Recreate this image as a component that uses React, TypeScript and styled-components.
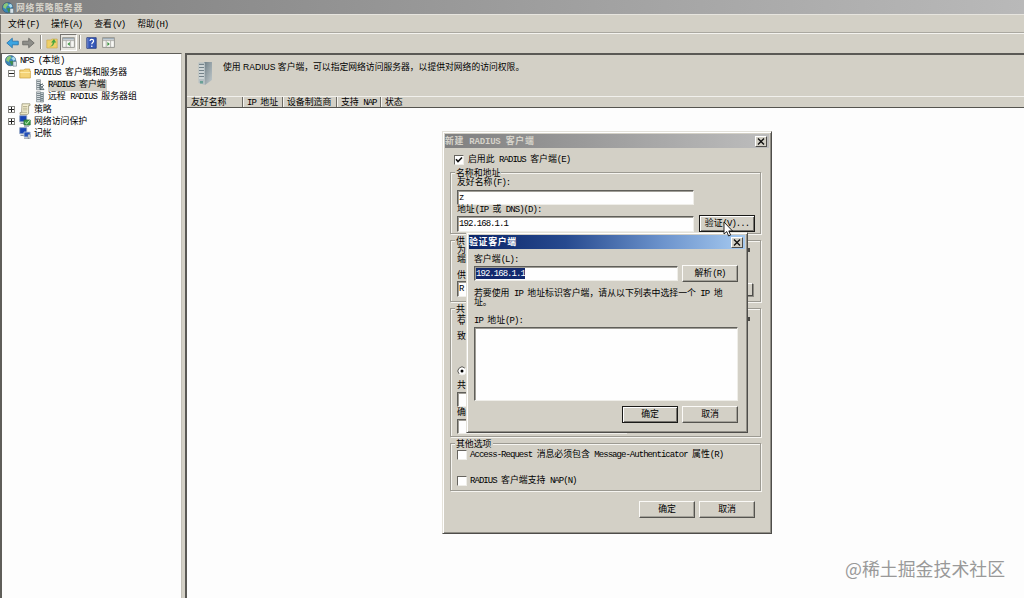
import React from 'react';
import styled, { createGlobalStyle, css } from 'styled-components';

const Global = createGlobalStyle`
  * { box-sizing: border-box; }
  body { margin: 0; overflow: hidden; background: #fdfdfd; }
`;

const FACE = '#d3d0c6';

/* ---------- text: full-width glyphs 8.88px, half-width glyphs 4.44px ---------- */

const Half = styled.span`
  font-family: "Liberation Mono", monospace;
  font-size: 9px;
  letter-spacing: -0.96px;
`;
const Line = styled.span<{ $bold?: boolean; $color?: string }>`
  display: inline-block;
  font: ${p => (p.$bold ? 700 : 400)} 8.88px/12px "Noto Sans CJK SC", sans-serif;
  color: ${p => p.$color || '#000'};
  white-space: pre;
  flex: none;
  margin-bottom: 1px;
  ${p =>
    p.$bold &&
    css`
      letter-spacing: 0.7px;
      margin-bottom: 0;
      ${Half} { letter-spacing: -0.2px; }
    `}
`;

function Text({ children, bold, color }: { children: string; bold?: boolean; color?: string }) {
  const runs = children.match(/[\x20-\x7e]+|[^\x20-\x7e]+/g) || [];
  return (
    <Line $bold={bold} $color={color}>
      {runs.map((r, i) => (/^[\x20-\x7e]/.test(r) ? <Half key={i}>{r}</Half> : r))}
    </Line>
  );
}

/* ---------- main window ---------- */

const Desktop = styled.div`
  position: relative;
  width: 1024px;
  height: 598px;
  display: flex;
  flex-direction: column;
  overflow: hidden;
  background: ${FACE};
`;
const AppTitle = styled.div`
  height: 15px;
  flex: none;
  display: flex;
  align-items: center;
  gap: 2px;
  padding: 1px 0 0 2px;
  background: linear-gradient(90deg, #808080, #b9b9b9);
  border-bottom: 1px solid #e6e4de;
`;
const MenuBar = styled.div`
  height: 18px;
  flex: none;
  display: flex;
  align-items: center;
  gap: 12px;
  padding: 3px 0 0 7px;
  border-left: 1px solid #77756f;
  border-bottom: 1px solid #aaa8a0;
`;
const ToolBar = styled.div`
  height: 20px;
  flex: none;
  display: flex;
  align-items: flex-start;
  padding-left: 4px;
  border-top: 1px solid #f4f3ef;
  border-left: 1px solid #77756f;
`;
const Tool = styled.div<{ $w: number; $pressed?: boolean }>`
  width: ${p => p.$w}px;
  height: 17px;
  display: flex;
  align-items: center;
  justify-content: center;
  ${p =>
    p.$pressed &&
    css`
      background: #e8e6e0;
      border: 1px solid;
      border-color: #77756f #fff #fff #77756f;
    `}
`;
const Divider = styled.div`
  width: 2px;
  height: 14px;
  margin: 1px 2px 0;
  border-left: 1px solid #8d8b84;
  border-right: 1px solid #fff;
`;
const Body = styled.div`
  flex: 1;
  display: flex;
  min-height: 0;
`;
const Tree = styled.div`
  width: 182px;
  flex: none;
  padding-top: 1px;
  border: solid #5f5e59;
  border-width: 1px 0 0 2px;
  border-right: 1px solid #c3c1b8;
  background: #fdfdfd;
`;
const TreeRow = styled.div<{ $pad: number; $gap?: number }>`
  height: 12px;
  display: flex;
  align-items: center;
  padding-left: ${p => p.$pad}px;
  gap: ${p => p.$gap ?? 3}px;
`;
const Expander = styled.span`
  width: 7px;
  height: 7px;
  margin-right: 1px;
  flex: none;
  border: 1px solid #8a8a86;
  display: flex;
  align-items: center;
  justify-content: center;
`;
const Selected = styled.span`
  display: flex;
  height: 11px;
  align-items: center;
  background: #d2cfc5;
  padding-right: 1px;
`;
const Detail = styled.div`
  flex: 1;
  margin-left: 3px;
  border: solid #5a5955;
  border-width: 2px 0 0 2px;
  display: flex;
  flex-direction: column;
  background: #fdfdfd;
`;
const Banner = styled.div`
  height: 41px;
  flex: none;
  display: flex;
  align-items: flex-start;
  padding: 6px 0 0 10px;
  gap: 9px;
  background: ${FACE};
`;
const BannerText = styled.div`
  font: 8.8px/11px "Noto Sans CJK SC", sans-serif;
  color: #000;
  white-space: pre;
`;
const BannerLatin = styled.span`
  font-family: "Liberation Sans", sans-serif;
  font-size: 8.6px;
`;
const Columns = styled.div`
  height: 12px;
  flex: none;
  display: flex;
  background: ${FACE};
  border-top: 1px solid #f1f0ec;
  border-bottom: 1px solid #55544f;
`;
const Column = styled.div<{ $w?: number }>`
  width: ${p => (p.$w ? p.$w + 'px' : 'auto')};
  height: 10px;
  display: flex;
  align-items: center;
  padding: 1px 0 0 4px;
  ${p => p.$w && css`border-right: 1px solid #6d6b65; box-shadow: 1px 0 #f4f3ef;`}
`;

/* ---------- dialogs ---------- */

const Dialog = styled.div<{ $x: number; $y: number; $w: number; $h: number }>`
  position: absolute;
  left: ${p => p.$x}px;
  top: ${p => p.$y}px;
  width: ${p => p.$w}px;
  height: ${p => p.$h}px;
  background: ${FACE};
  border: 1px solid;
  border-color: #e4e2da #4e4d4a #4e4d4a #e4e2da;
  box-shadow: inset 1px 1px #fff, inset -1px -1px #918f87;
  padding: 2px;
  display: flex;
  flex-direction: column;
`;
const DialogTitle = styled.div<{ $active?: boolean }>`
  height: 14px;
  flex: none;
  display: flex;
  align-items: center;
  justify-content: space-between;
  padding: 0 2px 0 0;
  background: ${p =>
    p.$active
      ? 'linear-gradient(90deg, #0b2568 0%, #274a8f 35%, #6c93cc 70%, #a6caf0 100%)'
      : 'linear-gradient(90deg, #808080, #bdbdbd)'};
`;
const CloseBox = styled.div`
  width: 12px;
  height: 11px;
  display: flex;
  align-items: center;
  justify-content: center;
  background: ${FACE};
  border: 1px solid;
  border-color: #fff #4e4d4a #4e4d4a #fff;
`;
const Group = styled.div<{ $h: number; $mt: number }>`
  height: ${p => p.$h}px;
  margin: ${p => p.$mt}px 8px 0 5px;
  flex: none;
  border: 1px solid #9c9a92;
  box-shadow: 1px 1px #f6f5f1, inset 1px 1px #f6f5f1;
  padding: 0 5px 0 6px;
`;
const Legend = styled.div`
  display: flex;
  width: max-content;
  height: 10px;
  align-items: center;
  margin: -5px 0 0 -2px;
  padding: 0 1px;
  background: ${FACE};
`;
const Row = styled.div<{ $h?: number; $mt?: number; $gap?: number; $pl?: number; $spread?: boolean }>`
  display: flex;
  align-items: center;
  flex: none;
  height: ${p => p.$h ?? 10}px;
  margin-top: ${p => p.$mt ?? 0}px;
  gap: ${p => p.$gap ?? 0}px;
  padding-left: ${p => p.$pl ?? 0}px;
  ${p => p.$spread && css`justify-content: space-between;`}
`;
const Field = styled.div<{ $w: number; $h?: number }>`
  width: ${p => p.$w}px;
  height: ${p => p.$h ?? 16}px;
  flex: none;
  display: flex;
  align-items: center;
  padding-left: 1px;
  background: #fefefe;
  border: 1px solid;
  border-color: #5f5e59 #efeee9 #efeee9 #5f5e59;
  box-shadow: inset 1px 1px #a09e97;
`;
const Highlight = styled.span`
  display: flex;
  height: 11px;
  align-items: center;
  background: #12296e;
`;
const Button = styled.div<{ $default?: boolean }>`
  width: 56px;
  height: 17px;
  flex: none;
  display: flex;
  align-items: center;
  justify-content: center;
  background: ${FACE};
  border: 1px solid;
  border-color: ${p => (p.$default ? '#1a1a18' : '#fbfaf7 #55544f #55544f #fbfaf7')};
  box-shadow: ${p => (p.$default ? 'inset 1px 1px #fff, inset -1px -1px #77756f' : 'inset -1px -1px #a3a199')};
`;
const Check = styled.span`
  width: 10px;
  height: 10px;
  flex: none;
  display: flex;
  align-items: center;
  justify-content: center;
  background: #fff;
  border: 1px solid;
  border-color: #66645f #efeee9 #efeee9 #66645f;
`;
const Combo = styled.span`
  width: 14px;
  height: 13px;
  margin-right: 2px;
  background: ${FACE};
  border: 1px solid;
  border-color: #fff #4e4d4a #4e4d4a #fff;
  box-shadow: 1px 1px #8d8b84;
`;
const EdgeMark = styled.span`
  width: 2px;
  height: 4px;
  margin-right: 5px;
  background: #4a4945;
`;
const Pointer = styled.svg`
  position: absolute;
  left: 723px;
  top: 221px;
`;
const Watermark = styled.div`
  position: absolute;
  left: 845px;
  top: 555px;
  font: 17.9px/26px "Noto Sans CJK SC", sans-serif;
  color: #999;
  white-space: nowrap;
`;

/* ---------- icons ---------- */

const Globe = ({ size = 12 }: { size?: number }) => (
  <svg width={size} height={size} viewBox="0 0 12 12">
    <circle cx="5.6" cy="5.6" r="5.2" fill="#3b87b8" stroke="#31526b" strokeWidth=".6" />
    <path d="M2 2.2 5 .8l1.5 1.7L4.6 4.6 3.7 7 1 5.2z" fill="#8cc878" />
    <path d="M6.2 3 9 1.8l1.5 2.8-2 1.2z" fill="#a9dcf1" />
    <path d="M4.6 6.2 8 6l.6 2.2L6.6 10.6z" fill="#3f8f4d" />
    <path d="M8 6.5h3.5v4.7H8z" fill="#d7e3e9" stroke="#536a78" strokeWidth=".5" />
  </svg>
);
const Folder = () => (
  <svg width="12" height="11" viewBox="0 0 12 11">
    <path d="M.8 2h4l1-1h5v2h.6v7H.8z" fill="#f4d377" stroke="#c99f3c" strokeWidth=".7" />
    <path d="M1.2 4h10v1H1.2z" fill="#fdeaa8" />
  </svg>
);
const Server = ({ arrow }: { arrow?: boolean }) => (
  <svg width="10" height="12" viewBox="0 0 10 12">
    <path d="M1.5.8h4v10h-4z" fill="#d6dcdf" stroke="#7c878c" strokeWidth=".7" />
    <path d="M2 2.5h3M2 4.5h3M2 6.5h3M2 8.5h3" stroke="#66757b" strokeWidth=".8" />
    {arrow ? (
      <path d="M4.5 5.5h3v-1M5 6l4 4.6H5zM8.7 6 5 11" fill="none" stroke="#4d5e65" strokeWidth=".9" />
    ) : (
      <>
        <path d="M5.5 1.5h3v9.5h-3z" fill="#bfc8cc" stroke="#77858b" strokeWidth=".7" />
        <path d="M6 3.5h2M6 5.5h2M6 7.5h2M6 9.2h2" stroke="#5c6c73" strokeWidth=".8" />
      </>
    )}
  </svg>
);
const Scroll = () => (
  <svg width="12" height="12" viewBox="0 0 12 12">
    <path d="M3 .8h8v1.8H9.6v7.6c0 1-1 1.2-1.4 1.2H1V9.6h1.6z" fill="#f4efd2" stroke="#8d8768" strokeWidth=".7" />
    <path d="M4 3.5h4.3M4 5.2h4.3M4 6.9h4.3M3 9.3h5" stroke="#a39c78" strokeWidth=".7" />
  </svg>
);
const Computers = ({ shield }: { shield?: boolean }) => (
  <svg width="12" height="12" viewBox="0 0 12 12">
    <path d="M.7.7h7v6h-7z" fill="#1743b5" stroke="#8da0bd" strokeWidth=".8" />
    <path d="M1.5 8.3h4" stroke="#6a7787" strokeWidth="1" />
    <path d="M5 5h6.2v5H5z" fill={shield ? '#3a9d46' : '#2550b8'} stroke={shield ? '#2b6d38' : '#bac6d7'} strokeWidth=".8" />
    {shield ? <path d="M6 7.5 7.6 9 10.6 5.4" fill="none" stroke="#d6f3c9" /> : <path d="M9 7.5h2.2v4H9z" fill="#d4d7da" stroke="#7d8791" strokeWidth=".5" />}
    <path d="M5 11.2h5" stroke="#6a7787" strokeWidth=".8" />
  </svg>
);
const Arrow = ({ right }: { right?: boolean }) => (
  <svg width="13" height="12" viewBox="0 0 13 12">
    <path
      d={right ? 'M.7 4.2h6V1.2L12.2 6l-5.5 4.8v-3h-6z' : 'M12.3 4.2h-6V1.2L.8 6l5.5 4.8v-3h6z'}
      fill={right ? '#8d8d88' : '#3ba5e2'}
      stroke={right ? '#666662' : '#2270ab'}
      strokeWidth=".8"
    />
  </svg>
);
const UpFolder = () => (
  <svg width="12" height="12" viewBox="0 0 12 12">
    <path d="M.8 3h4l1-1h5.4v9H.8z" fill="#efd069" stroke="#c8a547" strokeWidth=".6" />
    <path d="M3 9.5c2 0 3.5-1.5 3.8-4L5 5.6 8 2l2.2 3.6-1.7-.1C8 8 6 10 3 9.5z" fill="#46a540" />
  </svg>
);
const Panel = ({ flip }: { flip?: boolean }) => (
  <svg width="13" height="11" viewBox="0 0 13 11">
    <path d="M.6.6h11.8v9.8H.6z" fill="#f7f7f3" stroke="#85857f" strokeWidth=".8" />
    <path d="M1 1.8h11" stroke="#94a2ae" strokeWidth="1.4" />
    <path d="M1 3.6h11M4.2 3.6v7M8.6 3.6v7" stroke="#9b9b95" strokeWidth=".7" />
    <path d={flip ? 'M5.4 5v4l2.4-2z' : 'M7.8 5v4L5.4 7z'} fill="#3e9242" />
  </svg>
);
const Help = () => (
  <svg width="11" height="12" viewBox="0 0 11 12">
    <path d="M.8.7h9.4v10.6H.8z" fill="#3558b9" stroke="#24397e" strokeWidth=".8" />
    <path d="M1.8 1v10" stroke="#8fa5e0" strokeWidth=".7" />
    <path d="M4 4.1c0-2.2 3.6-2.2 3.6 0 0 1.5-1.8 1.4-1.8 3.1" fill="none" stroke="#fff" strokeWidth="1.2" />
    <circle cx="5.8" cy="9.2" r=".8" fill="#fff" />
  </svg>
);
const Tower = () => (
  <svg width="17" height="25" viewBox="0 0 17 25">
    <defs>
      <linearGradient id="side" x1="0" x2="1" y1="0" y2="1">
        <stop offset="0" stopColor="#6f7f87" />
        <stop offset="1" stopColor="#c3cbcd" />
      </linearGradient>
    </defs>
    <path d="M7 1h8v18l-7 5z" fill="url(#side)" />
    <path d="M1.5 1.5H8V24l-6.5-2z" fill="#b5bfc2" />
    <path d="M2 3.5h5M2 6.5h5M2 9.5h5M2 12.5h5M2 15.5h5" stroke="#74838a" strokeWidth="1" />
    <path d="M2 5h5M2 8h5M2 11h5M2 14h5M2 17h5" stroke="#eef2f2" strokeWidth=".9" />
    <path d="M3 20h3v2.5H3z" fill="#6aa095" />
  </svg>
);
const Cross = () => (
  <svg width="8" height="7" viewBox="0 0 8 7">
    <path d="M1 .5 7 6.5M7 .5 1 6.5" stroke="#111" strokeWidth="1.4" />
  </svg>
);
const Tick = () => (
  <svg width="8" height="8" viewBox="0 0 8 8">
    <path d="M1 3.3 3 5.6 7 1.5" fill="none" stroke="#111" strokeWidth="1.6" />
  </svg>
);
const Radio = () => (
  <svg width="10" height="10" viewBox="0 0 10 10">
    <circle cx="5" cy="5" r="4" fill="#fff" stroke="#efeee9" />
    <path d="M2.1 7.9A4 4 0 0 1 7.9 2.1" fill="none" stroke="#5c5b57" />
    <circle cx="5" cy="5" r="1.5" fill="#000" />
  </svg>
);
const Sign = ({ plus }: { plus?: boolean }) => (
  <svg width="5" height="5" viewBox="0 0 5 5">
    <path d={plus ? 'M0 2.5h5M2.5 0v5' : 'M0 2.5h5'} stroke="#222" />
  </svg>
);

/* ---------- dialogs content ---------- */

function NewClientDialog() {
  return (
    <Dialog $x={442} $y={131} $w={330} $h={403}>
      <DialogTitle>
        <Text bold color="#d6d3ca">新建 RADIUS 客户端</Text>
        <CloseBox><Cross /></CloseBox>
      </DialogTitle>
      <Row $mt={6} $pl={9} $gap={4} $h={12}>
        <Check><Tick /></Check>
        <Text>启用此 RADIUS 客户端(E)</Text>
      </Row>
      <Group $mt={6} $h={62}>
        <Legend><Text>名称和地址</Text></Legend>
        <Row $h={10}><Text>友好名称(F):</Text></Row>
        <Row $mt={2} $h={15}><Field $w={237} $h={15}><Text>z</Text></Field></Row>
        <Row $h={10}><Text>地址(IP 或 DNS)(D):</Text></Row>
        <Row $h={17} $gap={5}>
          <Field $w={237}><Text>192.168.1.1</Text></Field>
          <Button $default><Text>验证(V)...</Text></Button>
        </Row>
      </Group>
      <Group $mt={6} $h={62}>
        <Legend><Text>供</Text></Legend>
        <Row $h={8} $spread><Text>为</Text><EdgeMark /></Row>
        <Row $h={10}><Text>端</Text></Row>
        <Row $mt={6} $h={10}><Text>供</Text></Row>
        <Row $mt={1} $h={16} $spread>
          <Field $w={40}><Text>R</Text></Field>
          <Combo />
        </Row>
      </Group>
      <Group $mt={6} $h={129}>
        <Legend><Text>共</Text></Legend>
        <Row $h={10} $spread><Text>若</Text><EdgeMark /></Row>
        <Row $h={6} $pl={2}><Text>"</Text></Row>
        <Row $mt={1} $h={10}><Text>致</Text></Row>
        <Row $mt={24} $h={12}><Radio /></Row>
        <Row $mt={2} $h={12}><Text>共</Text></Row>
        <Row $mt={1} $h={15}><Field $w={170} $h={15} /></Row>
        <Row $h={11}><Text>确</Text></Row>
        <Row $mt={1} $h={15}><Field $w={170} $h={15} /></Row>
      </Group>
      <Group $mt={6} $h={48}>
        <Legend><Text>其他选项</Text></Legend>
        <Row $h={11} $gap={3}><Check /><Text>Access-Request 消息必须包含 Message-Authenticator 属性(R)</Text></Row>
        <Row $mt={15} $h={11} $gap={3}><Check /><Text>RADIUS 客户端支持 NAP(N)</Text></Row>
      </Group>
      <Row $mt={10} $h={17} $pl={194} $gap={4}>
        <Button><Text>确定</Text></Button>
        <Button><Text>取消</Text></Button>
      </Row>
    </Dialog>
  );
}

function VerifyDialog() {
  return (
    <Dialog $x={466} $y={232} $w={282} $h={201}>
      <DialogTitle $active>
        <Text bold color="#fff">验证客户端</Text>
        <CloseBox><Cross /></CloseBox>
      </DialogTitle>
      <Row $mt={6} $h={10} $pl={5}><Text>客户端(L):</Text></Row>
      <Row $h={17} $pl={5} $gap={4}>
        <Field $w={204} $h={15}><Highlight><Text color="#fff">192.168.1.1</Text></Highlight></Field>
        <Button><Text>解析(R)</Text></Button>
      </Row>
      <Row $mt={7} $h={9} $pl={5}><Text>若要使用 IP 地址标识客户端，请从以下列表中选择一个 IP 地</Text></Row>
      <Row $h={9} $pl={5}><Text>址。</Text></Row>
      <Row $mt={9} $h={10} $pl={5}><Text>IP 地址(P):</Text></Row>
      <Row $mt={1} $h={74} $pl={5}><Field $w={264} $h={74} /></Row>
      <Row $mt={5} $h={17} $pl={153} $gap={4}>
        <Button $default><Text>确定</Text></Button>
        <Button><Text>取消</Text></Button>
      </Row>
    </Dialog>
  );
}

export default function App() {
  return (
    <Desktop>
      <Global />
      <AppTitle>
        <Globe />
        <Text bold color="#d6d3ca">网络策略服务器</Text>
      </AppTitle>
      <MenuBar>
        <Text>文件(F)</Text>
        <Text>操作(A)</Text>
        <Text>查看(V)</Text>
        <Text>帮助(H)</Text>
      </MenuBar>
      <ToolBar>
        <Tool $w={14}><Arrow /></Tool>
        <Tool $w={19}><Arrow right /></Tool>
        <Divider />
        <Tool $w={16}><UpFolder /></Tool>
        <Tool $w={17} $pressed><Panel /></Tool>
        <Divider />
        <Tool $w={16}><Help /></Tool>
        <Tool $w={18}><Panel flip /></Tool>
      </ToolBar>
      <Body>
        <Tree>
          <TreeRow $pad={3}><Globe /><Text>NPS (本地)</Text></TreeRow>
          <TreeRow $pad={6}><Expander><Sign /></Expander><Folder /><Text>RADIUS 客户端和服务器</Text></TreeRow>
          <TreeRow $pad={33}><Server arrow /><Selected><Text>RADIUS 客户端</Text></Selected></TreeRow>
          <TreeRow $pad={33}><Server /><Text>远程 RADIUS 服务器组</Text></TreeRow>
          <TreeRow $pad={6}><Expander><Sign plus /></Expander><Scroll /><Text>策略</Text></TreeRow>
          <TreeRow $pad={6}><Expander><Sign plus /></Expander><Computers shield /><Text>网络访问保护</Text></TreeRow>
          <TreeRow $pad={17}><Computers /><Text>记帐</Text></TreeRow>
        </Tree>
        <Detail>
          <Banner>
            <Tower />
            <BannerText>
              使用<BannerLatin> RADIUS </BannerLatin>客户端，可以指定网络访问服务器，以提供对网络的访问权限。
            </BannerText>
          </Banner>
          <Columns>
            <Column $w={56}><Text>友好名称</Text></Column>
            <Column $w={40}><Text>IP 地址</Text></Column>
            <Column $w={54}><Text>设备制造商</Text></Column>
            <Column $w={44}><Text>支持 NAP</Text></Column>
            <Column><Text>状态</Text></Column>
          </Columns>
        </Detail>
      </Body>
      <NewClientDialog />
      <VerifyDialog />
      <Pointer width="10" height="17" viewBox="0 0 10 17">
        <path d="M1 1v12l2.8-2.4L5.6 15l2-.9-1.8-4.2h3.6z" fill="#fff" stroke="#111" strokeWidth=".9" />
      </Pointer>
      <Watermark>@稀土掘金技术社区</Watermark>
    </Desktop>
  );
}
